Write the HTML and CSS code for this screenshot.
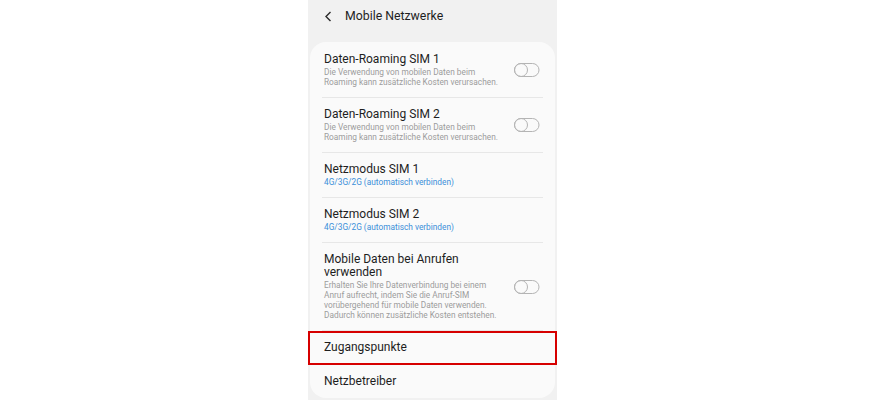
FILE: index.html
```html
<!DOCTYPE html>
<html lang="de">
<head>
<meta charset="utf-8">
<title>Mobile Netzwerke</title>
<link rel="stylesheet" href="styles.css">
</head>
<body>
<div class="stage">
  <div class="phone">
    <header class="appbar">
      <svg class="back" width="9" height="11" viewBox="0 0 9 11"><path d="M6.5 1 L2 5.5 L6.5 10" fill="none" stroke="#2b2b2b" stroke-width="1.4"/></svg>
      <h1 class="appbar-title">Mobile Netzwerke</h1>
    </header>
    <section class="card">
      <div class="row">
        <div class="row-inner divided">
          <div class="row-text">
            <div class="row-title">Daten-Roaming SIM 1</div>
            <div class="row-sub">Die Verwendung von mobilen Daten beim<br>Roaming kann zusätzliche Kosten verursachen.</div>
          </div>
          <svg class="toggle" width="26" height="14" viewBox="0 0 26 14"><rect x="0.5" y="0.5" width="24.5" height="13" rx="6.5" fill="none" stroke="#b4b4b4"/><circle cx="7" cy="7" r="6.5" fill="none" stroke="#b4b4b4"/></svg>
        </div>
      </div>
      <div class="row">
        <div class="row-inner divided">
          <div class="row-text">
            <div class="row-title">Daten-Roaming SIM 2</div>
            <div class="row-sub">Die Verwendung von mobilen Daten beim<br>Roaming kann zusätzliche Kosten verursachen.</div>
          </div>
          <svg class="toggle" width="26" height="14" viewBox="0 0 26 14"><rect x="0.5" y="0.5" width="24.5" height="13" rx="6.5" fill="none" stroke="#b4b4b4"/><circle cx="7" cy="7" r="6.5" fill="none" stroke="#b4b4b4"/></svg>
        </div>
      </div>
      <div class="row">
        <div class="row-inner divided single">
          <div class="row-text">
            <div class="row-title">Netzmodus SIM 1</div>
            <div class="row-sub blue">4G/3G/2G (automatisch verbinden)</div>
          </div>
        </div>
      </div>
      <div class="row">
        <div class="row-inner divided single">
          <div class="row-text">
            <div class="row-title">Netzmodus SIM 2</div>
            <div class="row-sub blue">4G/3G/2G (automatisch verbinden)</div>
          </div>
        </div>
      </div>
      <div class="row">
        <div class="row-inner divided">
          <div class="row-text">
            <div class="row-title">Mobile Daten bei Anrufen<br>verwenden</div>
            <div class="row-sub">Erhalten Sie Ihre Datenverbindung bei einem<br>Anruf aufrecht, indem Sie die Anruf-SIM<br>vorübergehend für mobile Daten verwenden.<br>Dadurch können zusätzliche Kosten entstehen.</div>
          </div>
          <svg class="toggle" width="26" height="14" viewBox="0 0 26 14"><rect x="0.5" y="0.5" width="24.5" height="13" rx="6.5" fill="none" stroke="#b4b4b4"/><circle cx="7" cy="7" r="6.5" fill="none" stroke="#b4b4b4"/></svg>
        </div>
      </div>
      <div class="row highlight">
        <div class="row-inner simple divided">
          <div class="row-title">Zugangspunkte</div>
        </div>
      </div>
      <div class="row">
        <div class="row-inner simple">
          <div class="row-title">Netzbetreiber</div>
        </div>
      </div>
    </section>
  </div>
</div>
</body>
</html>
```

FILE: styles.css
```css
html, body {
  margin: 0;
  padding: 0;
  background: #ffffff;
  font-family: Roboto, "Noto Sans", "Liberation Sans", sans-serif;
}

.stage {
  height: 400px;
  padding-left: 308px;
  overflow: hidden;
}

.phone {
  width: 249px;
  height: 400px;
  background: #f1f1f1;
  overflow: hidden;
}

.appbar {
  box-sizing: border-box;
  height: 42px;
  padding: 8px 0 0 16px;
  display: flex;
  align-items: flex-start;
  gap: 12px;
}

.back {
  display: block;
  margin-top: 3px;
}

.appbar-title {
  margin: 0;
  font-size: 12.3px;
  line-height: 16px;
  font-weight: 400;
  color: #1e1e1e;
}

.card {
  margin: 0 2px;
  background: #fafafa;
  border-radius: 16px;
  padding-top: 1px;
}

.row {
  padding: 0 12px;
  position: relative;
}

.row-inner {
  box-sizing: border-box;
  display: flex;
  align-items: center;
  padding: 10px 3px 10px 2px;
}

.row-inner.divided {
  border-bottom: 1px solid #e7e7e7;
}

.row-inner.single {
  min-height: 45px;
}

.row-inner.simple {
  padding-top: 10px;
  padding-bottom: 10px;
}

.row-text {
  flex: 1;
}

.row-title {
  font-size: 12px;
  line-height: 13px;
  color: #1e1e1e;
  white-space: nowrap;
}

.row-sub {
  margin-top: 1px;
  font-size: 8.3px;
  line-height: 10px;
  color: #9c9c9c;
  white-space: nowrap;
}

.row-sub.blue {
  color: #3b8fd9;
}

.toggle {
  display: block;
  flex: none;
}

.highlight::after {
  content: "";
  position: absolute;
  top: 0;
  bottom: 0;
  left: -2px;
  right: -2px;
  border: 2px solid #d60000;
}
```
